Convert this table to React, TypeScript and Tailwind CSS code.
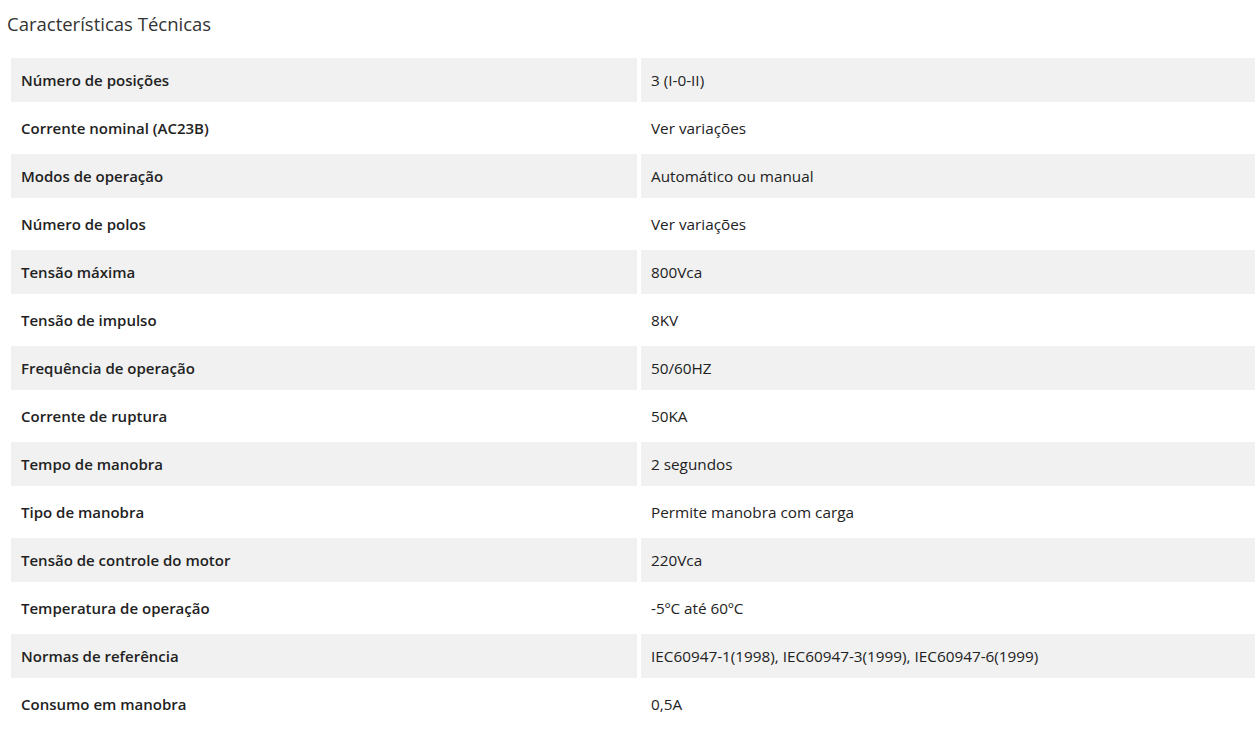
import React from "react";

const specs: [string, string][] = [
  ["Número de posições", "3 (I-0-II)"],
  ["Corrente nominal (AC23B)", "Ver variações"],
  ["Modos de operação", "Automático ou manual"],
  ["Número de polos", "Ver variações"],
  ["Tensão máxima", "800Vca"],
  ["Tensão de impulso", "8KV"],
  ["Frequência de operação", "50/60HZ"],
  ["Corrente de ruptura", "50KA"],
  ["Tempo de manobra", "2 segundos"],
  ["Tipo de manobra", "Permite manobra com carga"],
  ["Tensão de controle do motor", "220Vca"],
  ["Temperatura de operação", "-5ºC até 60ºC"],
  ["Normas de referência", "IEC60947-1(1998), IEC60947-3(1999), IEC60947-6(1999)"],
  ["Consumo em manobra", "0,5A"],
];

export default function App() {
  return (
    <div className="w-[1255px] h-[736px] overflow-hidden bg-white font-['Open_Sans',sans-serif] text-[#222]">
      <h2 className="pl-[7px] pt-[11px] h-[58px] text-[18.5px] leading-[26px] text-[#333] font-normal">
        Características Técnicas
      </h2>
      <div className="pl-[11px] grid grid-cols-[626px_614px] gap-x-[4px] gap-y-[4px]">
        {specs.map(([label, value], i) => (
          <React.Fragment key={label}>
            <div
              className={`h-[44px] flex items-center pl-[10px] pt-[1px] text-[15px] font-semibold ${
                i % 2 === 0 ? "bg-[#f1f1f1]" : "bg-white"
              }`}
            >
              {label}
            </div>
            <div
              className={`h-[44px] flex items-center pl-[10px] pt-[1px] text-[15.3px] ${
                i % 2 === 0 ? "bg-[#f1f1f1]" : "bg-white"
              }`}
            >
              {value}
            </div>
          </React.Fragment>
        ))}
      </div>
    </div>
  );
}
